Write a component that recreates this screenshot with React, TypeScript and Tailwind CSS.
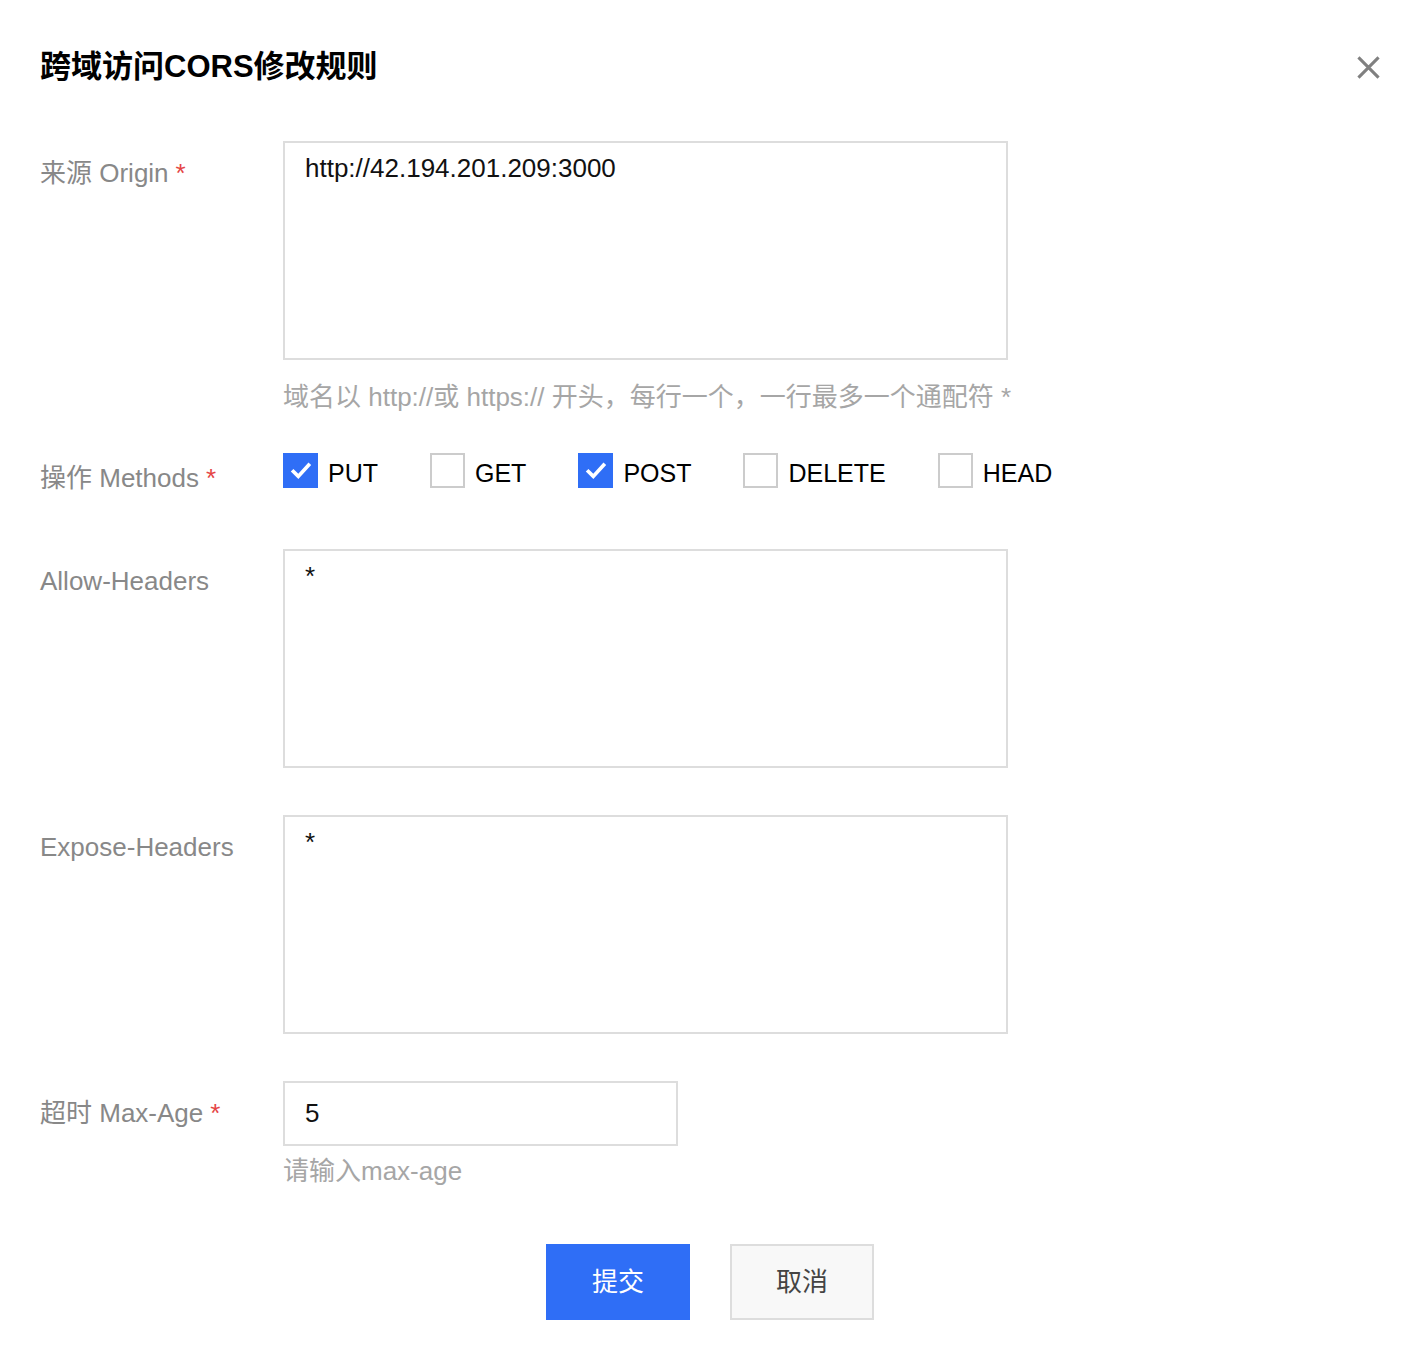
import { useState } from "react";

const methods = [
    { name: "PUT", checked: true },
    { name: "GET", checked: false },
    { name: "POST", checked: true },
    { name: "DELETE", checked: false },
    { name: "HEAD", checked: false },
];

const Required = () => <span className="ml-[7px] text-[#e54545]">*</span>;

const Label = ({ children, className = "" }: { children: React.ReactNode; className?: string }) => (
    <div className={`w-[243px] shrink-0 text-[26px] leading-9 text-[#888888] ${className}`}>{children}</div>
);

const Checkbox = ({ name, initial }: { name: string; initial: boolean }) => {
    const [checked, setChecked] = useState(initial);
    return (
        <label className="mr-[52px] flex h-[35px] cursor-pointer items-center gap-[10px]" onClick={() => setChecked(!checked)}>
            <span
                className={`flex h-[35px] w-[35px] items-center justify-center border-2 ${
                    checked ? "border-[#2f6ef6] bg-[#2f6ef6]" : "border-[#cccccc] bg-white"
                }`}
            >
                {checked && (
                    <svg viewBox="0 0 24 24" className="h-[26px] w-[26px]" fill="none" stroke="white" strokeWidth="3.4" strokeLinecap="square">
                        <path d="M5 12.5l4.5 4.5 9.5-10.5" />
                    </svg>
                )}
            </span>
            <span className="pt-[4px] text-[25px] leading-9 text-black">{name}</span>
        </label>
    );
};

const Area = ({ value }: { value: string }) => (
    <textarea
        defaultValue={value}
        className="block h-[219px] w-[725px] resize-none border-2 border-[#dddddd] bg-white px-5 py-[7px] text-[26px] leading-9 text-[#111111] outline-none"
    />
);

export default function App() {
    return (
        <div className="min-h-[1364px] w-full bg-white px-10 pt-[47px] font-['Liberation_Sans','Noto_Sans_CJK_SC',sans-serif]">
            <div className="flex items-center justify-between">
                <h1 className="text-[31px] font-bold leading-10 text-black">跨域访问CORS修改规则</h1>
                <button className="flex h-8 w-8 items-center justify-center">
                    <svg viewBox="0 0 24 24" className="h-[23px] w-[23px]" stroke="#808080" strokeWidth="3.2">
                        <path d="M1.5 1.5l21 21M22.5 1.5l-21 21" />
                    </svg>
                </button>
            </div>

            <div className="mt-[54px] flex">
                <Label className="pt-[14px]">
                    来源 Origin<Required />
                </Label>
                <div>
                    <Area value="http://42.194.201.209:3000" />
                    <p className="mt-[19px] text-[26px] leading-9 text-[#a6a6a6]">
                        域名以 http://或 https:// 开头，每行一个，一行最多一个通配符 *
                    </p>
                </div>
            </div>

            <div className="mt-[38px] flex">
                <Label className="pt-[7px]">
                    操作 Methods<Required />
                </Label>
                <div className="flex">
                    {methods.map((m) => (
                        <Checkbox key={m.name} name={m.name} initial={m.checked} />
                    ))}
                </div>
            </div>

            <div className="mt-[53px] flex">
                <Label className="pt-[14px]">Allow-Headers</Label>
                <Area value="*" />
            </div>

            <div className="mt-[47px] flex">
                <Label className="pt-[14px]">Expose-Headers</Label>
                <Area value="*" />
            </div>

            <div className="mt-[47px] flex">
                <Label className="pt-[14px]">
                    超时 Max-Age<Required />
                </Label>
                <div>
                    <input
                        defaultValue="5"
                        className="block h-[65px] w-[395px] border-2 border-[#dddddd] bg-white px-5 text-[26px] text-[#111111] outline-none"
                    />
                    <p className="mt-[7px] text-[26px] leading-9 text-[#a6a6a6]">请输入max-age</p>
                </div>
            </div>

            <div className="mt-[55px] flex justify-center gap-10 pr-[4px]">
                <button className="h-[76px] w-[144px] bg-[#2f6ef6] text-[26px] text-white">提交</button>
                <button className="h-[76px] w-[144px] border-2 border-[#dddddd] bg-[#f8f8f8] text-[26px] text-[#444444]">取消</button>
            </div>
        </div>
    );
}
